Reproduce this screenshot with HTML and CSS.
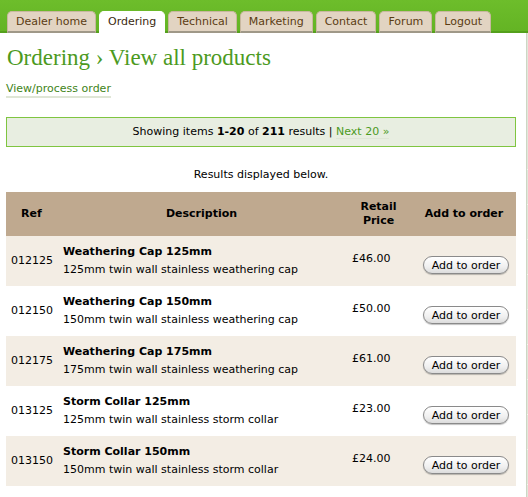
FILE: index.html
```html
<!DOCTYPE html>
<html>
<head>
<meta charset="utf-8">
<link rel="stylesheet" href="styles.css">
</head>
<body>
<div class="topbar">
  <nav class="tabs">
    <a class="tab">Dealer home</a>
    <a class="tab active">Ordering</a>
    <a class="tab">Technical</a>
    <a class="tab">Marketing</a>
    <a class="tab">Contact</a>
    <a class="tab">Forum</a>
    <a class="tab">Logout</a>
  </nav>
</div>
<div class="page">
  <main class="main">
    <h1 class="title">Ordering › View all products</h1>
    <p class="sublinks"><a class="sublink">View/process order</a></p>
    <div class="pager">Showing items <b>1-20</b> of <b>211</b> results | <a class="next">Next 20 »</a></div>
    <p class="note">Results displayed below.</p>
    <table class="products">
      <colgroup>
        <col class="w-ref">
        <col class="w-desc">
        <col class="w-price">
        <col class="w-add">
      </colgroup>
      <thead>
        <tr>
          <th class="c-ref">Ref</th>
          <th class="c-desc">Description</th>
          <th class="c-price">Retail<br>Price</th>
          <th class="c-add">Add to order</th>
        </tr>
      </thead>
      <tbody>
        <tr class="odd">
          <td class="c-ref">012125</td>
          <td class="c-desc"><b>Weathering Cap 125mm</b><br>125mm twin wall stainless weathering cap</td>
          <td class="c-price">£46.00</td>
          <td class="c-add"><button class="btn">Add to order</button></td>
        </tr>
        <tr>
          <td class="c-ref">012150</td>
          <td class="c-desc"><b>Weathering Cap 150mm</b><br>150mm twin wall stainless weathering cap</td>
          <td class="c-price">£50.00</td>
          <td class="c-add"><button class="btn">Add to order</button></td>
        </tr>
        <tr class="odd">
          <td class="c-ref">012175</td>
          <td class="c-desc"><b>Weathering Cap 175mm</b><br>175mm twin wall stainless weathering cap</td>
          <td class="c-price">£61.00</td>
          <td class="c-add"><button class="btn">Add to order</button></td>
        </tr>
        <tr>
          <td class="c-ref">013125</td>
          <td class="c-desc"><b>Storm Collar 125mm</b><br>125mm twin wall stainless storm collar</td>
          <td class="c-price">£23.00</td>
          <td class="c-add"><button class="btn">Add to order</button></td>
        </tr>
        <tr class="odd">
          <td class="c-ref">013150</td>
          <td class="c-desc"><b>Storm Collar 150mm</b><br>150mm twin wall stainless storm collar</td>
          <td class="c-price">£24.00</td>
          <td class="c-add"><button class="btn">Add to order</button></td>
        </tr>
        <tr>
          <td class="c-ref">013175</td>
          <td class="c-desc"><b>Storm Collar 175mm</b><br>175mm twin wall stainless storm collar</td>
          <td class="c-price">£25.00</td>
          <td class="c-add"><button class="btn">Add to order</button></td>
        </tr>
      </tbody>
    </table>
  </main>
  <aside class="side">
    <div class="side-top"></div>
    <div class="side-row"></div>
    <div class="side-row"></div>
    <div class="side-row"></div>
    <div class="side-row"></div>
    <div class="side-row"></div>
    <div class="side-row"></div>
    <div class="side-row"></div>
    <div class="side-row"></div>
    <div class="side-row"></div>
  </aside>
</div>
</body>
</html>
```
FILE: styles.css
```css
html, body {
  margin: 0;
  padding: 0;
  background: #fff;
  overflow: hidden;
}
body {
  font-family: "DejaVu Sans", Verdana, sans-serif;
  font-size: 11px;
  color: #000;
  width: 528px;
  height: 497px;
}
.topbar {
  height: 31px;
  background: linear-gradient(#6dbd2b, #64b424);
  border-bottom: 2px solid #54a01c;
  display: flex;
  align-items: flex-end;
}
.tabs {
  display: flex;
  gap: 3px;
  padding-left: 7px;
  margin-bottom: -2px;
}
.tab {
  display: block;
  height: 19px;
  line-height: 20px;
  padding: 0 8px;
  background: #e2d4c2;
  color: #5b3c12;
  border: 1px solid #c8b89f;
  border-bottom: 2px solid #9f9888;
  border-radius: 5px 5px 0 0;
  font-size: 11px;
  box-sizing: content-box;
}
.tab.active {
  background: #fff;
  color: #3b2a10;
  border-color: #fff;
  border-bottom-color: #fff;
}
.page {
  display: flex;
  height: 464px;
}
.main {
  width: 510px;
  padding-left: 6px;
  flex: none;
}
.side {
  margin-left: 10px;
  flex: 1;
  background: #e2e7db;
  border-left: 1px solid #cdd6c4;
}
.side-top {
  height: 136px;
  border-bottom: 1px solid #f4f6f0;
}
.side-row {
  height: 34px;
  border-bottom: 1px solid #f4f6f0;
}
.title {
  margin: 12px 0 0 1px;
  font-family: "Liberation Serif", serif;
  font-weight: normal;
  font-size: 23px;
  line-height: 26px;
  color: #4c9a1e;
}
.sublinks {
  margin: 11px 0 0 0;
  line-height: 14px;
}
.sublink {
  color: #3f8420;
  text-decoration: none;
  border-bottom: 2px solid #dfe6d6;
  padding-bottom: 1px;
}
.pager {
  margin-top: 21px;
  height: 28px;
  line-height: 28px;
  background: #e8eee1;
  border: 1px solid #7fc540;
  text-align: center;
}
.next {
  color: #4c9a1e;
  text-decoration: none;
  border-bottom: 1px solid #dfe6d6;
}
.note {
  margin: 21px 0 0 0;
  text-align: center;
  line-height: 14px;
}
.products {
  margin-top: 10px;
  width: 510px;
  border-collapse: collapse;
  table-layout: fixed;
}
.w-ref { width: 52px; }
.w-desc { width: 287px; }
.w-price { width: 67px; }
.w-add { width: 104px; }
.products th,
.products td {
  box-sizing: border-box;
  padding: 0;
}
.products th {
  background: #bfa98f;
  height: 44px;
  font-weight: bold;
  line-height: 14px;
  text-align: center;
}
.products th.c-ref {
  text-align: left;
  padding-left: 15px;
}
.products td {
  height: 50px;
  vertical-align: middle;
  line-height: 18px;
}
.products tr.odd td {
  background: #f3ede4;
}
.products td.c-ref { padding-left: 5px; }
.products td.c-desc { padding-left: 5px; }
.products td.c-price { padding-left: 7px; padding-bottom: 4px; }
.products td.c-add { text-align: center; padding-top: 8px; }
.btn {
  font-family: "DejaVu Sans", Verdana, sans-serif;
  font-size: 11px;
  height: 18px;
  width: 86px;
  padding: 0;
  margin-left: 4px;
  color: #000;
  border: 1px solid #8a8a8a;
  border-radius: 9px;
  background: linear-gradient(#ffffff, #f0f0f0 60%, #dcdcdc);
  box-shadow: 0 1px 1px rgba(0,0,0,0.25);
  vertical-align: top;
}
```
